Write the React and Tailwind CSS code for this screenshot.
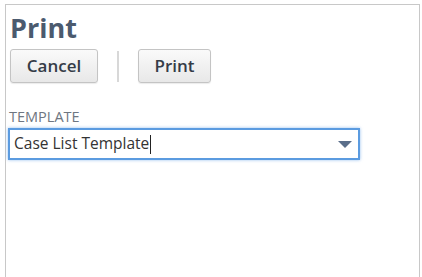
import React from 'react';

export default function App() {
  return (
    <div className="w-[422px] h-[277px] bg-white pt-[4px] pl-[5px] pr-[2px] overflow-hidden" style={{ fontFamily: '"Open Sans", "Noto Sans", sans-serif' }}>
      <div className="h-[280px] border-l border-t border-r border-[#c8c8c8] pl-[1px] pr-[60px]">
        <h1 className="ml-[3px] mt-[7px] text-[27px] leading-[32px] font-bold text-[#4b5a6e]">Print</h1>
        <div className="mt-[5px] flex items-center">
          <button className="ml-[3px] w-[88px] h-[34px] rounded-[3px] border border-[#c4c4c4] bg-gradient-to-b from-[#fafafa] to-[#e8e8e8] text-[17px] font-semibold text-[#353c47] shadow-[0_1px_1px_rgba(0,0,0,0.08)]">
            Cancel
          </button>
          <div className="mx-[19px] w-[2px] h-[31px] bg-[#d8d8d8]" />
          <button className="w-[73px] h-[34px] rounded-[3px] border border-[#c4c4c4] bg-gradient-to-b from-[#fafafa] to-[#e8e8e8] text-[17px] font-semibold text-[#353c47] shadow-[0_1px_1px_rgba(0,0,0,0.08)]">
            Print
          </button>
        </div>
        <div className="mt-[25px] ml-[2px] text-[14.5px] leading-[17px] text-[#6e7681] uppercase">Template</div>
        <div className="mt-[3px] ml-[1px] w-[352px] h-[32px] flex items-center justify-between border-2 border-[#5b9be0] shadow-[0_0_3px_rgba(80,150,230,0.6)] bg-white pl-[4px] pr-[5px]">
          <span className="text-[15.5px] text-[#333] flex items-center">
            Case List Template
            <span className="inline-block w-px h-[19px] bg-[#222] ml-[1px]" />
          </span>
          <svg width="14" height="7" viewBox="0 0 14 7" className="mr-[1px]">
            <path d="M0 0 H14 L7 7 Z" fill="#5a6e8a" />
          </svg>
        </div>
      </div>
    </div>
  );
}
